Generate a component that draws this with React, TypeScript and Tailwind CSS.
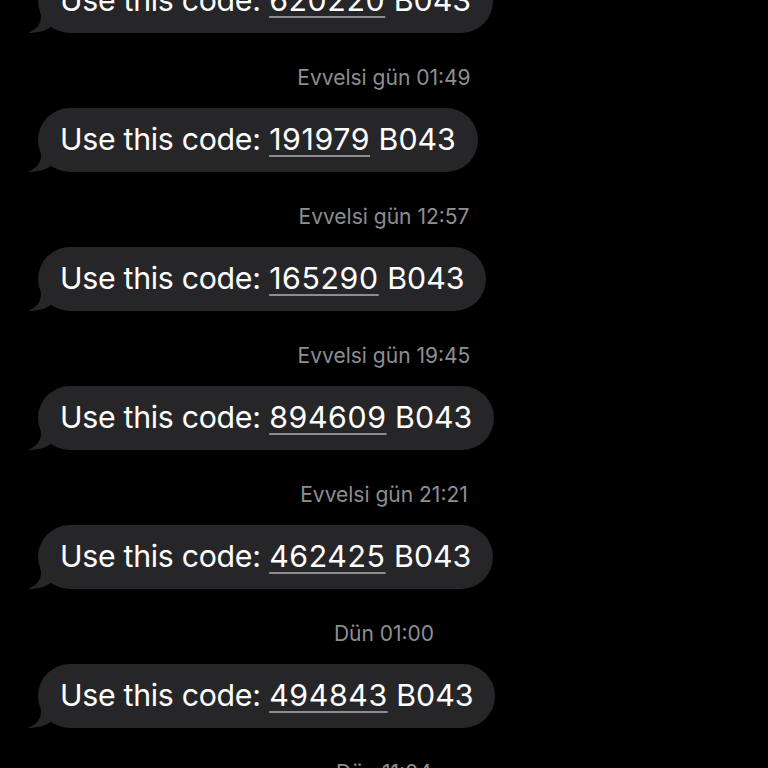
const messages = [
	{ code: "620220", time: "Evvelsi gün 01:49" },
	{ code: "191979", time: "Evvelsi gün 12:57" },
	{ code: "165290", time: "Evvelsi gün 19:45" },
	{ code: "894609", time: "Evvelsi gün 21:21" },
	{ code: "462425", time: "Dün 01:00" },
	{ code: "494843", time: "Dün 11:04" },
];

function Tail() {
	return (
		<svg className="absolute left-[-11px] bottom-0" width="30" height="30" viewBox="0 0 30 30">
			<path d="M14 0 L14 14 C14 22 8 27 1 30 C10 30 19 28 25 23 L30 18 L30 0 Z" fill="#262629" />
		</svg>
	);
}

export default function App() {
	return (
		<div className="h-[768px] w-[768px] overflow-hidden bg-black" style={{ fontFamily: "Inter, 'Noto Sans', sans-serif" }}>
			<div className="mt-[-31px] flex flex-col pl-[38px]">
				{messages.map((m, k) => (
					<div key={k} className="flex flex-col">
						{/* bubble */}
						<div className="relative self-start">
							<Tail />
							<div className="relative flex h-[64px] items-center rounded-[32px] bg-[#262629] pl-[22px] pr-[22px] text-[30.3px] text-white">
								<span>
									<span className="tracking-[-0.3px]">Use this code:</span>{" "}
									<span className="tracking-[0.6px] underline decoration-[#8d8d92] decoration-2 underline-offset-[5px]">{m.code}</span> B043
								</span>
							</div>
						</div>

						{/* time stamp */}
						<div className="pr-[38px] pt-[34px] pb-[19px] text-center text-[21px] leading-[22px] text-[#8e8e93]">{m.time}</div>
					</div>
				))}
			</div>
		</div>
	);
}
